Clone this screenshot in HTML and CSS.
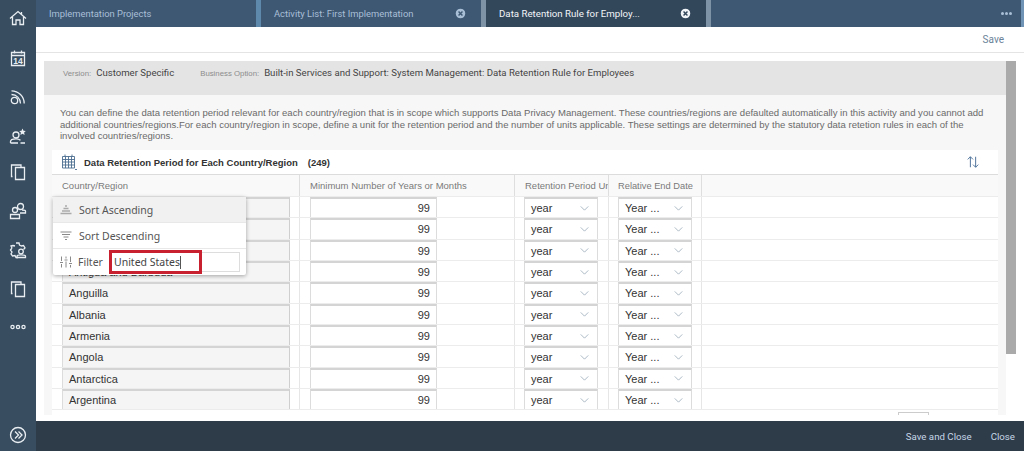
FILE: index.html
```html
<!DOCTYPE html>
<html lang="en">
<head>
<meta charset="utf-8">
<title>Data Retention Rule for Employees</title>
<link rel="stylesheet" href="styles.css">
</head>
<body>
<div class="app">
  <nav class="rail">
    <svg class="ic" viewBox="0 0 18 18"><path d="M1 9.500 9 2.500 17 9.500M3.500 8V15.500H7V11H11V15.500H14.500V8M12.500 3V5.500"/></svg>
    <svg class="ic ic-cal" viewBox="0 0 18 18"><path d="M2.500 3.500H15.500V16.500H2.500ZM2.500 6.500H15.500M5.500 1.500V4.500M12.500 1.500V4.500"/><text x="9" y="14.800" class="ic-num">14</text></svg>
    <svg class="ic" viewBox="0 0 18 18"><circle cx="5.500" cy="12.500" r="3.200"/><path d="M2.500 6.500A9 9 0 0 1 11.500 15.500M2.500 2.800A12.700 12.700 0 0 1 15.200 15.500"/></svg>
    <svg class="ic" viewBox="0 0 18 18"><circle cx="7" cy="8" r="3"/><path d="M1.500 16V14.500C1.500 12.500 4 11.800 7 11.800S10.500 12.300 11.500 13.200M1.500 16H9M11.500 16H16"/><path class="solid" d="M13.500 1.500l1 2.200 2.300.3-1.700 1.600.5 2.300-2.100-1.200-2.100 1.200.5-2.300-1.700-1.600 2.300-.3z"/></svg>
    <svg class="ic ic-copy" viewBox="0 0 18 18"><path d="M6.500 4.500H15.500V16.500H6.500ZM3.500 13.500H2.500V2H12V4.500"/></svg>
    <svg class="ic" viewBox="0 0 18 18"><circle cx="11.500" cy="4.500" r="3"/><circle cx="6" cy="8" r="2.500"/><path d="M1.500 16.500V12.500H10.500V16.500ZM11 11H16.500V9C16.500 8 15 8 13 8"/></svg>
    <svg class="ic" viewBox="0 0 18 18"><path d="M7 2H10L10.500 4 12.500 5 14.500 4.500 16 7 14.500 8.500M4 4.500 6 5M3 7 1.500 9 3 11 2 13 3.500 15 6 14.500 7 16.500H9M3 7 2 5 4 4.500"/><circle cx="12" cy="10.500" r="2.300"/><path d="M8 16.500V15C8 14 10 13.800 12 13.800S16.500 14 16.500 15V16.500Z"/></svg>
    <svg class="ic" viewBox="0 0 18 18"><path d="M6.500 4.500H15.500V16.500H6.500ZM3.500 13.500H2.500V2H12V4.500"/></svg>
    <svg class="ic ic-dots" viewBox="0 0 18 18"><circle cx="3.500" cy="9" r="1.600"/><circle cx="9" cy="9" r="1.600"/><circle cx="14.500" cy="9" r="1.600"/></svg>
    <svg class="ic ic-expand" viewBox="0 0 18 18"><circle cx="9" cy="9" r="7.500"/><path d="M6 5.500 9.500 9 6 12.500M9.500 5.500 13 9 9.500 12.500"/></svg>
  </nav>
  <div class="main">
    <header class="tabs">
      <div class="tab"><span class="tab-label">Implementation Projects</span></div>
      <div class="tab-sep"></div>
      <div class="tab"><span class="tab-label">Activity List: First Implementation</span><svg class="tab-close" viewBox="0 0 10 10"><circle cx="5" cy="5" r="5"/><path d="M3.200 3.200 6.800 6.800M6.800 3.200 3.200 6.800"/></svg></div>
      <div class="tab-sep tab-sep-b"></div>
      <div class="tab tab-active"><span class="tab-label">Data Retention Rule for Employ...</span><svg class="tab-close" viewBox="0 0 10 10"><circle cx="5" cy="5" r="5"/><path d="M3.200 3.200 6.800 6.800M6.800 3.200 3.200 6.800"/></svg></div>
      <div class="tab-sep tab-sep-b"></div>
      <div class="tab-rest"><span class="tab-more"><i></i><i></i><i></i></span></div>
    </header>
    <div class="toolbar"><span class="save">Save</span></div>
    <div class="content">
      <section class="panel">
        <div class="meta">
          <span class="meta-label">Version:</span><span class="meta-value meta-version">Customer Specific</span>
          <span class="meta-label">Business Option:</span><span class="meta-value">Built-in Services and Support: System Management: Data Retention Rule for Employees</span>
        </div>
        <p class="intro">You can define the data retention period relevant for each country/region that is in scope which supports Data Privacy Management. These countries/regions are defaulted automatically in this activity and you cannot add additional countries/regions.For each country/region in scope, define a unit for the retention period and the number of units applicable. These settings are determined by the statutory data retetion rules in each of the involved countries/regions.</p>
        <div class="table">
          <div class="table-title">
            <svg class="grid-ic" viewBox="0 0 18 18"><path d="M2.500 3.500H14.500V15H2.500ZM2.500 6.500H14.500M2.500 9H14.500M2.500 12H14.500M5.500 3.500V15M8.500 3.500V15M11.500 3.500V15M5 1.500V3.500M12 1.500V3.500M15 16 16 17 17 16"/></svg>
            <strong class="title-text">Data Retention Period for Each Country/Region</strong>
            <strong class="title-count">(249)</strong>
            <svg class="sort-ic" viewBox="0 0 16 16"><path d="M5 14V2M2 5 5 2 8 5M11 2V14M8 11 11 14 14 11"/></svg>
          </div>
          <div class="row head">
            <div class="c c-sel"></div>
            <div class="c c-country">Country/Region</div>
            <div class="c c-min">Minimum Number of Years or Months</div>
            <div class="c c-unit">Retention Period Unit</div>
            <div class="c c-end">Relative End Date</div>
            <div class="c c-fill"></div>
          </div>
          <div class="body" id="rows"></div>
          <div class="table-foot"><span class="h-thumb"></span></div>
        </div>
        <div class="popover">
          <div class="pop-item pop-hover">
            <svg class="pop-ic pop-ic-light" viewBox="0 0 14 14"><path d="M6 3H8M4.500 5.500H9.500M3 8H11M1.500 10.500H12.500"/></svg>
            <span>Sort Ascending</span>
          </div>
          <div class="pop-item">
            <svg class="pop-ic" viewBox="0 0 14 14"><path d="M1.500 3H12.500M3 5.500H11M4.500 8H9.500M6 10.500H8"/></svg>
            <span>Sort Descending</span>
          </div>
          <div class="pop-item pop-filter">
            <svg class="pop-ic" viewBox="0 0 14 14"><path d="M2.500 1.500V6M2.500 9V12.500M7 1.500V3.500M7 6.500V12.500M11.500 1.500V7M11.500 10V12.500M1 7.500H4M5.500 5H8.500M10 8.500H13"/></svg>
            <span>Filter</span>
            <div class="filter-box"><span class="filter-text">United States</span><span class="caret"></span></div>
            <span class="callout"></span>
          </div>
        </div>
      </section>
      <div class="scrolltrack"><div class="scrollthumb"></div></div>
    </div>
    <footer class="foot"><span>Save and Close</span><span>Close</span></footer>
  </div>
</div>
<template id="row-tpl">
  <div class="row">
    <div class="c c-sel"></div>
    <div class="c c-country"><div class="in in-ro"></div></div>
    <div class="c c-min"><div class="in in-num">99</div></div>
    <div class="c c-unit"><div class="in in-sel"><span>year</span><svg class="chev" viewBox="0 0 10 6"><path d="M.5.500 5 5 9.500.500"/></svg></div></div>
    <div class="c c-end"><div class="in in-sel"><span>Year ...</span><svg class="chev" viewBox="0 0 10 6"><path d="M.5.500 5 5 9.500.500"/></svg></div></div>
    <div class="c c-fill"></div>
  </div>
</template>
<script src="rows.js"></script>
</body>
</html>
```
FILE: rows.js
```js
var names = ["Andorra", "United Arab Emirates", "Afghanistan", "Antigua and Barbuda", "Anguilla", "Albania", "Armenia", "Angola", "Antarctica", "Argentina"];
var tpl = document.getElementById("row-tpl");
var rows = document.getElementById("rows");
names.forEach(function (name) {
  var node = tpl.content.cloneNode(true);
  node.querySelector(".in-ro").textContent = name;
  rows.appendChild(node);
});
```
FILE: styles.css
```css
* { box-sizing: border-box; }
html, body { margin: 0; height: 100%; overflow: hidden; background: #fff; }
body { font-family: "Liberation Sans", Arial, sans-serif; color: #333; }
.app { display: flex; width: 1024px; height: 451px; overflow: hidden; }

.rail { width: 36px; flex: none; background: #384d5f; display: flex; flex-direction: column; align-items: center; padding-top: 9px; gap: 21px; }
.ic { width: 18px; height: 18px; flex: none; fill: none; stroke: #e9eef3; stroke-width: 1.300; }
.ic .solid { fill: #e9eef3; stroke: none; }
.ic-num { font: bold 8.500px "Liberation Sans", sans-serif; text-anchor: middle; fill: #e9eef3; stroke: none; }
.ic-cal { margin-top: 1px; }
.ic-copy { margin-top: -3px; }
.ic-dots { margin-top: -1px; }
.ic-expand { margin-top: auto; margin-bottom: 7px; }

.main { flex: 1; min-width: 0; display: flex; flex-direction: column; }

.tabs { height: 27px; flex: none; display: flex; background: #3d5670; font-family: Roboto, sans-serif; font-size: 9.400px; }
.tab { width: 220px; flex: none; display: flex; align-items: center; justify-content: space-between; padding: 0 15px 0 13px; color: #a9bfd6; background: #3e5874; }
.tab-active { color: #f2f5f8; background: #33475b; font-size: 9.700px; }
.tab-sep { width: 5px; flex: none; background: #5f88ad; }
.tab-sep-b { background: #7f93a7; }
.tab-close { width: 11px; height: 11px; fill: #a9bfd6; stroke: #3e5874; stroke-width: 1.300; }
.tab-active .tab-close { fill: #f2f5f8; stroke: #33475b; }
.tab-rest { flex: 1; display: flex; align-items: center; justify-content: flex-end; padding-right: 9px; background: #3e5874; border-right: 3px solid #6f93b5; }
.tab-more { display: flex; gap: 1px; }
.tab-more i { width: 3px; height: 3px; border-radius: 50%; background: #a9bfd6; }

.toolbar { height: 26px; flex: none; display: flex; align-items: center; justify-content: flex-end; padding-right: 20px; border-bottom: 1px solid #e4e4e4; }
.save { font-family: Roboto, sans-serif; font-size: 10px; color: #6b8299; }

.content { flex: 1; min-height: 0; display: flex; padding: 8px 8px 6px; }
.panel { position: relative; width: 962px; flex: none; overflow: hidden; background: #f7f7f7; }
.scrolltrack { flex: 1; }
.scrollthumb { height: 293px; background: #aaa; }

.meta { height: 34px; background: #e4e4e4; padding: 6px 0 0 19px; display: flex; align-items: baseline; }
.meta-label { font-size: 7.800px; color: #8c8c8c; margin-right: 5px; }
.meta-value { font-family: Roboto, sans-serif; font-size: 9.600px; color: #444; }
.meta-version { margin-right: 26px; }

.intro { margin: 0; padding: 12px 10px 0 16px; height: 55px; font-size: 9.550px; line-height: 11.500px; color: #6a6a6a; }

.table { margin: 0 8px; background: #fff; }
.table-title { height: 25px; display: flex; align-items: center; padding: 0 18px 0 8px; border-bottom: 1px solid #dcdcdc; font-size: 9.500px; color: #333; }
.grid-ic { width: 18px; height: 18px; fill: none; stroke: #4b6d90; stroke-width: .900; margin-right: 6px; }
.title-count { margin-left: 10px; }
.sort-ic { width: 14px; height: 14px; margin-left: auto; fill: none; stroke: #4b7099; stroke-width: 1.100; }

.row { display: flex; height: 21.330px; border-bottom: 1px solid #ececec; }
.head { height: 22px; background: #f9f9f9; font-size: 9.500px; color: #7a7a7a; }
.c { flex: none; height: 100%; border-right: 1px solid #e6e6e6; display: flex; align-items: center; overflow: hidden; white-space: nowrap; }
.head .c { border-right-color: #dedede; }
.c-sel { width: 10px; border-right: 0; }
.c-country { width: 238px; }
.c-min { width: 215px; padding-left: 10px; }
.c-unit { width: 94px; padding-left: 9px; }
.c-end { width: 93px; padding-left: 9px; }
.c-fill { flex: 1; border-right: 0; }
.head .c-unit { padding-left: 10px; }
.head .c-end { padding-left: 9px; font-size: 9.300px; }

.in { height: 100%; display: flex; align-items: center; background: #fff; border: 1px solid #dcdcdc; border-top: 2px solid #d4d4d4; border-bottom: 0; font-size: 11px; color: #333; }
.in-ro { width: 228px; background: #f5f5f5; padding-left: 6px; border-right-color: #cfcfcf; }
.in-num { width: 127px; justify-content: flex-end; padding-right: 6px; }
.in-sel { width: 74px; justify-content: space-between; padding: 0 8px 0 6px; }
.chev { width: 9px; height: 5px; fill: none; stroke: #8296a8; stroke-width: .800; }

.table-foot { height: 8px; position: relative; background: #fff; }
.h-thumb { position: absolute; left: 846px; top: 2px; width: 31px; height: 3px; border: 1px solid #ccc; border-bottom: 0; }

.popover { position: absolute; left: 9px; top: 136px; width: 193px; height: 78px; background: #fff; border-radius: 2px; box-shadow: 0 1px 4px rgba(0,0,0,.35); font-family: "Noto Sans", sans-serif; font-size: 10.500px; color: #555; }
.pop-item { height: 26px; display: flex; align-items: center; padding-left: 6px; gap: 6px; border-bottom: 1px solid #e8e8e8; position: relative; }
.pop-hover { background: #f1f1f1; }
.pop-filter { border-bottom: 0; gap: 5px; }
.pop-ic { width: 14px; height: 14px; flex: none; fill: none; stroke: #8a8a8a; stroke-width: 1; }
.pop-ic-light { stroke: #aaa; stroke-width: 1.300; }
.filter-box { position: absolute; left: 57px; top: 3px; width: 130px; height: 20px; background: #fff; border: 1px solid #ddd; display: flex; align-items: center; padding-left: 3px; color: #444; }
.caret { width: 1px; height: 13px; background: #555; }
.callout { position: absolute; left: 56px; top: 1px; width: 93px; height: 24px; border: 3px solid #c8202f; }

.foot { height: 30px; flex: none; background: #2e3c4a; display: flex; align-items: center; justify-content: flex-end; gap: 19px; padding-right: 9px; font-family: Roboto, sans-serif; font-size: 9.700px; color: #c6d6e6; }
```
